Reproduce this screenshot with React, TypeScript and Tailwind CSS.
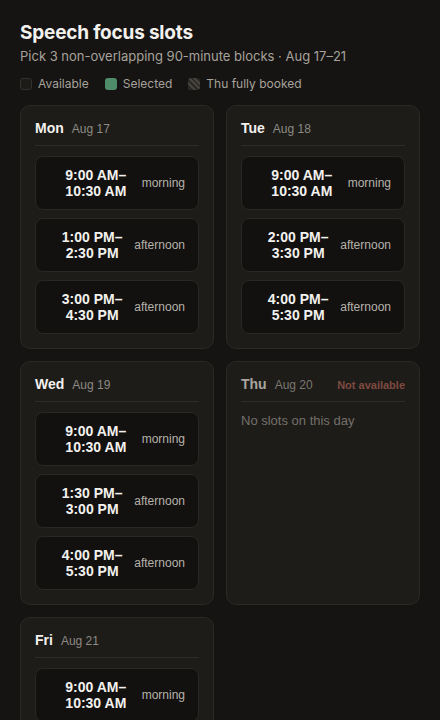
import React from 'react';

interface Slot {
    start: string;
    end: string;
    part: 'morning' | 'afternoon';
}

interface Day {
    name: string;
    date: string;
    slots: Slot[];
}

const days: Day[] = [
    {
        name: 'Mon',
        date: 'Aug 17',
        slots: [
            { start: '9:00 AM', end: '10:30 AM', part: 'morning' },
            { start: '1:00 PM', end: '2:30 PM', part: 'afternoon' },
            { start: '3:00 PM', end: '4:30 PM', part: 'afternoon' },
        ],
    },
    {
        name: 'Tue',
        date: 'Aug 18',
        slots: [
            { start: '9:00 AM', end: '10:30 AM', part: 'morning' },
            { start: '2:00 PM', end: '3:30 PM', part: 'afternoon' },
            { start: '4:00 PM', end: '5:30 PM', part: 'afternoon' },
        ],
    },
    {
        name: 'Wed',
        date: 'Aug 19',
        slots: [
            { start: '9:00 AM', end: '10:30 AM', part: 'morning' },
            { start: '1:30 PM', end: '3:00 PM', part: 'afternoon' },
            { start: '4:00 PM', end: '5:30 PM', part: 'afternoon' },
        ],
    },
    { name: 'Thu', date: 'Aug 20', slots: [] },
    {
        name: 'Fri',
        date: 'Aug 21',
        slots: [
            { start: '9:00 AM', end: '10:30 AM', part: 'morning' },
            { start: '1:00 PM', end: '2:30 PM', part: 'afternoon' },
            { start: '3:30 PM', end: '5:00 PM', part: 'afternoon' },
        ],
    },
];

const SlotButton: React.FC<{ slot: Slot }> = ({ slot }) => (
    <button
        type="button"
        className="flex h-[54px] w-full items-center rounded-lg border border-[#2a2825] bg-[#121110] pl-[14px] pr-[13px] text-left"
    >
        <span className="flex-1 text-center text-[14px] font-bold leading-4 text-[#f3f1ee]">
            {slot.start}–
            <br />
            {slot.end}
        </span>
        <span className="text-[12px] leading-4 text-[#b6b1a9]">{slot.part}</span>
    </button>
);

const DayCard: React.FC<{ day: Day }> = ({ day }) => {
    const booked = day.slots.length === 0;
    return (
        <div className="rounded-[10px] border border-[#2b2926] bg-[#1d1c19] px-[14px] pt-[13px] pb-[14px]">
            <div className="flex items-baseline gap-2 border-b border-[#2e2c28] pb-[7px] leading-[18px]">
                <span className={`text-[14px] font-bold ${booked ? 'text-[#a9a59f]' : 'text-[#f3f1ee]'}`}>
                    {day.name}
                </span>
                <span className={`text-[12px] ${booked ? 'text-[#7a7670]' : 'text-[#8e8a84]'}`}>{day.date}</span>
                {booked && (
                    <span className="ml-auto text-[11px] font-bold text-[#7f4a40]">Not available</span>
                )}
            </div>
            {booked ? (
                <p className="mt-[10px] text-[13px] leading-[18px] text-[#74706a]">No slots on this day</p>
            ) : (
                <div className="mt-[10px] flex flex-col gap-2">
                    {day.slots.map(slot => (
                        <SlotButton key={slot.start} slot={slot} />
                    ))}
                </div>
            )}
        </div>
    );
};

export default function App() {
    return (
        <div className="min-h-screen bg-[#151412] px-5 pt-5 pb-8 font-['Liberation_Sans',Arial,sans-serif]">
            <h1 className="font-['Inter',sans-serif] text-[19px] font-bold leading-[26px] tracking-[-0.2px] text-[#f3f1ee]">
                Speech focus slots
            </h1>
            <p className="mt-px font-['Inter',sans-serif] text-[13px] leading-[18px] text-[#a7a29b]">
                Pick 3 non-overlapping 90-minute blocks · Aug 17–21
            </p>

            <div className="mt-[10px] flex items-center gap-4 font-['Inter',sans-serif] text-[12px] leading-[18px] text-[#a7a29b]">
                <div className="flex items-center gap-1.5">
                    <span className="h-3 w-3 rounded-[3px] border border-[#34322e] bg-[#1c1b18]" />
                    Available
                </div>
                <div className="flex items-center gap-1.5">
                    <span className="h-3 w-3 rounded-[3px] bg-[#4e8c6a]" />
                    Selected
                </div>
                <div className="flex items-center gap-1.5">
                    <span className="h-3 w-3 rounded-[3px] bg-[repeating-linear-gradient(45deg,#46433f_0_2px,#2a2825_2px_4px)]" />
                    Thu fully booked
                </div>
            </div>

            <div className="mt-[12px] grid grid-cols-2 gap-x-3 gap-y-3">
                {days.map(day => (
                    <DayCard key={day.name} day={day} />
                ))}
            </div>
        </div>
    );
}
